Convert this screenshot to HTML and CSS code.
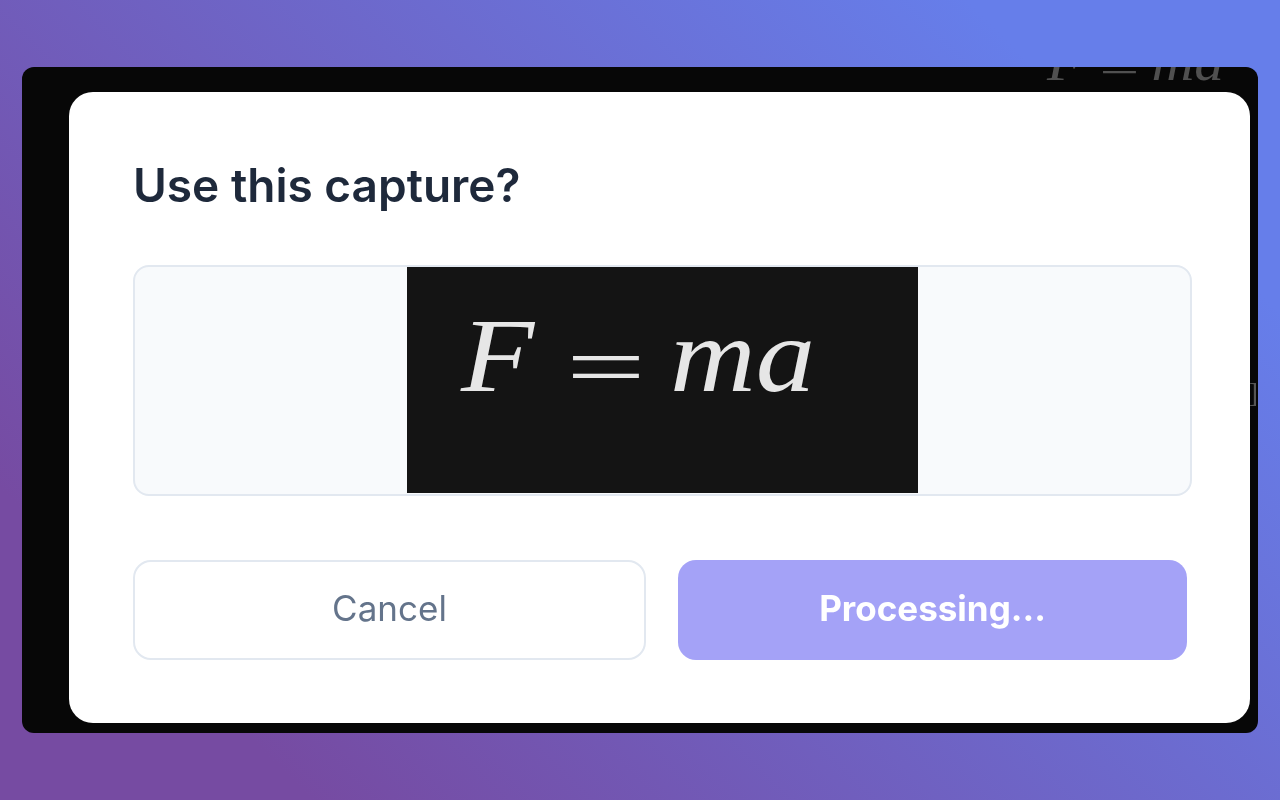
FILE: index.html
```html
<!DOCTYPE html>
<html lang="en">
<head>
<meta charset="utf-8">
<title>Use this capture?</title>
<link rel="stylesheet" href="styles.css">
</head>
<body>
<div class="window">
  <div class="formula ghost-formula"><span class="f">F</span><span class="eq">=</span><span class="ma">ma</span></div>
  <div class="ghost-frag">]</div>
  <section class="modal">
    <h1 class="title">Use this capture?</h1>
    <div class="preview">
      <div class="capture">
        <div class="formula"><span class="f">F</span><span class="eq">=</span><span class="ma">ma</span></div>
      </div>
    </div>
    <div class="actions">
      <button class="btn btn-cancel">Cancel</button>
      <button class="btn btn-primary">Processing...</button>
    </div>
  </section>
</div>
</body>
</html>
```
FILE: styles.css
```css
* { box-sizing: border-box; }
html, body { margin: 0; height: 100%; }
body {
  width: 1280px;
  height: 800px;
  overflow: hidden;
  display: flex;
  align-items: center;
  justify-content: center;
  background: linear-gradient(45deg, #764ba2 0%, #764ba2 15%, #667eea 85%, #667eea 100%);
  font-family: Inter, "Liberation Sans", sans-serif;
}
.window {
  position: relative;
  width: 1236px;
  height: 666px;
  padding: 25px 8px 10px 47px;
  display: flex;
  background: #070707;
  border-radius: 12px;
  overflow: hidden;
}
.formula {
  display: flex;
  align-items: baseline;
  font-family: "Liberation Serif", serif;
  font-style: italic;
  font-size: 106px;
  line-height: 122px;
  color: #e6e6e6;
  filter: blur(0.6px);
}
.f, .eq, .ma { display: inline-block; transform-origin: left center; }
.f { width: 73px; transform: scaleX(1.13); }
.eq {
  font-style: normal;
  font-size: 114px;
  margin: 0 40px 0 32px;
  transform: translateY(14px) scale(1.24, 0.77);
}
.ma { transform: scaleX(1.12); }
.ghost-formula {
  position: absolute;
  left: 1025px;
  top: -37px;
  width: 400px;
  color: #505050;
  transform: scale(0.5);
  transform-origin: left top;
}
.ghost-frag {
  position: absolute;
  right: 0;
  top: 310px;
  font-family: "Liberation Serif", serif;
  font-size: 28px;
  line-height: 32px;
  color: #555;
  filter: blur(0.4px);
}
.modal {
  position: relative;
  flex: 1;
  display: flex;
  flex-direction: column;
  padding: 68px 58px 63px 64px;
  background: #fff;
  border-radius: 24px;
  filter: blur(0.3px);
}
.title {
  margin: 0;
  height: 50px;
  font-size: 46px;
  line-height: 50px;
  font-weight: 600;
  color: #1e293b;
}
.preview {
  margin-top: 55px;
  height: 231px;
  display: flex;
  justify-content: center;
  background: #f8fafc;
  border: 2px solid #e2e8f0;
  border-radius: 16px;
  overflow: hidden;
}
.capture {
  width: 511px;
  height: 226px;
  padding: 25px 0 0 54px;
  background: #141414;
}
.actions {
  margin-top: 63.5px;
  display: flex;
  gap: 32px;
}
.btn {
  height: 100px;
  padding: 0 0 3px;
  font-family: inherit;
  font-size: 35px;
  border-radius: 18px;
}
.btn-cancel {
  width: 513px;
  background: #fff;
  border: 2px solid #e2e8f0;
  color: #64748b;
  font-weight: 400;
}
.btn-primary {
  width: 509px;
  background: #a4a2f7;
  border: 0;
  color: #fff;
  font-weight: 700;
}
```
